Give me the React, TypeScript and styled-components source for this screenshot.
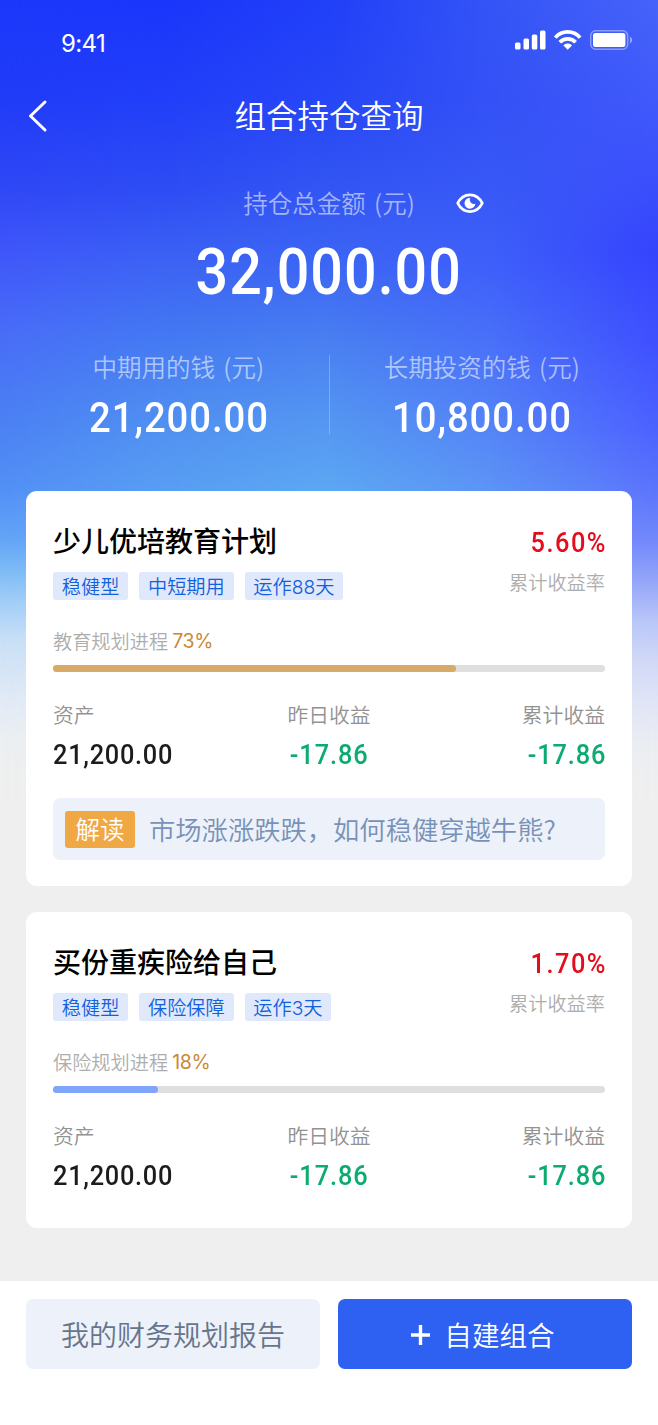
import React from "react";
import styled, { createGlobalStyle } from "styled-components";

const Global = createGlobalStyle`
  * { box-sizing: border-box; }
  body { margin: 0; background: #fff; }
`;

const Page = styled.main`
  position: relative;
  width: 658px;
  height: 1425px;
  display: flex;
  flex-direction: column;
  background: #efefef;
  overflow: hidden;
  color: #fff;
  white-space: nowrap;
  font-family: "Noto Sans CJK SC", sans-serif;
  font-weight: 350;
`;

const Backdrop = styled.div`
  position: absolute;
  inset: 0 0 auto 0;
  height: 800px;
`;

const Wash = styled.div<{ $colors: string; $mask?: string }>`
  position: absolute;
  inset: 0;
  background: linear-gradient(to bottom, ${(p) => p.$colors});
  ${(p) => p.$mask && `mask-image: linear-gradient(to right, ${p.$mask});`}
`;

const coolFade = "#64a5f6 540px, #7dbbf6 570px, #a0cdf8 600px, #c9e0f7 640px, #e2eaf5 700px, #eceff2 740px, #efefef 790px";
const violetFade = "#7288fb 540px, #93a5f8 580px, #b8c5f8 620px, #d0d8f6 660px, #dfe4f6 700px, #ebedf2 745px, #efefef 790px";

const washes = [
  { colors: `#1c38fb 0, #213cf8 100px, #3048f6 190px, #3f56fa 250px, #496cf8 330px, #4b80f4 420px, #5390f6 490px, ${coolFade}` },
  { colors: `#1a36fb 0, #223ff9 100px, #2e4df4 190px, #3c62f4 260px, #447af2 340px, #4f8df1 410px, #589ef3 490px, ${coolFade}`, mask: "transparent 0, #000 165px" },
  { colors: "#2140f9 0, #2747f6 100px, #3356f3 190px, #3d68f3 270px, #4b82f1 350px, #5496f1 420px, #5ca8f3 490px, #efefef 790px", mask: "transparent 165px, #000 329px" },
  { colors: `#3555f6 0, #3452f6 100px, #3859f6 190px, #3f60fa 270px, #4a72f8 350px, #5482f7 420px, #5c94f5 490px, ${violetFade}`, mask: "transparent 329px, #000 494px" },
  { colors: `#4663f9 0, #4059fb 100px, #3b4efc 190px, #3544fd 250px, #3f50ff 340px, #4c62ff 430px, #5c74fc 490px, ${violetFade}`, mask: "transparent 494px, #000 658px" },
];

const StatusBar = styled.header`
  position: relative;
  height: 80px;
  padding: 27px 25px 0 61px;
  display: flex;
  justify-content: space-between;
`;
const Clock = styled.span`
  font: 400 24px/34px "Inter", sans-serif;
  letter-spacing: -0.6px;
`;
const StatusIcons = styled.svg`
  display: block;
  width: 118px;
  height: 24px;
  margin-top: 2px;
`;
const NavBar = styled.nav`
  position: relative;
  height: 72px;
  display: flex;
  align-items: center;
  justify-content: center;
`;
const BackButton = styled.button`
  position: absolute;
  left: 26px;
  top: 17px;
  padding: 0;
  border: 0;
  background: none;
  line-height: 0;
`;
const Title = styled.h1`
  margin: 0 0 4px;
  font-size: 31.5px;
  line-height: 44px;
  font-weight: 350;
`;
const Total = styled.section`
  position: relative;
  height: 186px;
  padding-top: 33px;
  display: flex;
  flex-direction: column;
  align-items: center;
`;
const TotalLabel = styled.div`
  display: flex;
  align-items: center;
  gap: 41px;
  padding-left: 69px;
  line-height: 36px;
`;
const EyeIcon = styled.svg`
  display: block;
`;
const Caption = styled.span`
  font-size: 24.5px;
  line-height: 36px;
  word-spacing: 3px;
  color: rgba(255, 255, 255, 0.56);
`;
const Figure = styled.span<{ $size: number; $color?: string; $origin?: string; $spacing?: number }>`
  display: block;
  font-family: "Roboto", sans-serif;
  font-weight: 500;
  font-size: ${(p) => p.$size}px;
  line-height: 1.2;
  letter-spacing: ${(p) => p.$spacing ?? 0.024}em;
  margin-right: -${(p) => p.$spacing ?? 0.024}em;
  color: ${(p) => p.$color ?? "#fff"};
  transform: scaleX(0.89);
  transform-origin: ${(p) => p.$origin ?? "center"};
`;
const TotalFigure = styled.div`
  margin: 13px 2px 0 0;
`;
const Split = styled.section`
  position: relative;
  height: 153px;
  display: flex;
  padding-top: 11px;
`;
const SplitItem = styled.div<{ $left?: number; $right?: number }>`
  flex: none;
  width: 328.5px;
  display: flex;
  flex-direction: column;
  align-items: center;
  gap: 7px;
  padding-left: ${(p) => p.$left ?? 0}px;
  padding-right: ${(p) => p.$right ?? 0}px;
`;
const Divider = styled.i`
  flex: none;
  width: 1px;
  height: 79px;
  margin-top: 6px;
  background: rgba(255, 255, 255, 0.26);
`;
const Cards = styled.div`
  position: relative;
  display: flex;
  flex-direction: column;
  gap: 26px;
  padding: 0 26px;
`;
const Card = styled.article<{ $height: number }>`
  height: ${(p) => p.$height}px;
  padding: 32px 27px 0;
  border-radius: 11px;
  background: #fff;
`;
const CardTop = styled.div`
  display: flex;
  justify-content: space-between;
  height: 101px;
`;
const CardTitle = styled.h2`
  margin: -1px 0 0;
  font-size: 28px;
  line-height: 36px;
  font-weight: 500;
  color: #000;
`;
const Tags = styled.div`
  display: flex;
  gap: 11px;
  margin-top: 14px;
`;
const Tag = styled.span`
  height: 28px;
  padding: 0 8.8px;
  border-radius: 3px;
  background: #e0e8fb;
  color: #1260dc;
  font-family: "Inter", "Noto Sans CJK SC", sans-serif;
  font-size: 19.2px;
  line-height: 30px;
`;
const Rate = styled.div`
  display: flex;
  flex-direction: column;
  align-items: flex-end;
  padding-top: 3px;
`;
const RateLabel = styled.span`
  font-size: 19.2px;
  line-height: 28px;
  margin-top: 8px;
  color: #adadad;
`;
const Progress = styled.div`
  display: flex;
  align-items: center;
  gap: 4px;
  height: 34px;
  font-size: 19.2px;
  color: #adadad;
`;
const Percent = styled.span`
  font: 400 19.5px/34px "Inter", sans-serif;
  letter-spacing: -0.3px;
  color: #c98a35;
`;
const Track = styled.div`
  height: 7px;
  margin-top: 7px;
  border-radius: 4px;
  background: #dfdfdf;
`;
const Fill = styled.div<{ $color: string }>`
  height: 7px;
  border-radius: 4px;
  background: ${(p) => p.$color};
`;
const Stats = styled.div`
  display: grid;
  grid-template-columns: 1fr 1fr 1fr;
  margin-top: 26px;
`;
const Stat = styled.div<{ $align: string }>`
  display: flex;
  flex-direction: column;
  align-items: ${(p) => p.$align};
  gap: 8px;
`;
const StatLabel = styled.span`
  font-size: 20.8px;
  line-height: 32px;
  color: #929292;
`;
const Notice = styled.div`
  display: flex;
  align-items: center;
  gap: 14px;
  height: 62px;
  margin-top: 26px;
  padding-left: 12px;
  border-radius: 7px;
  background: #edf1f9;
  color: #7891b8;
  font-size: 26.3px;
`;
const NoticeText = styled.span`
  line-height: 36px;
`;
const Badge = styled.span`
  width: 70px;
  height: 37px;
  border-radius: 3px;
  background: #f0a844;
  color: #fff;
  font-size: 24.5px;
  line-height: 36px;
  text-align: center;
`;
const Footer = styled.footer`
  position: relative;
  height: 144px;
  margin-top: auto;
  padding: 18px 26px;
  display: flex;
  gap: 18px;
  background: #fff;
`;
const Action = styled.button<{ $primary?: boolean }>`
  flex: 1;
  height: 70px;
  padding: 0;
  border: 0;
  border-radius: 7px;
  display: flex;
  align-items: center;
  justify-content: center;
  gap: 14px;
  font-family: inherit;
  font-size: ${(p) => (p.$primary ? 27.6 : 28)}px;
  font-weight: 350;
  background: ${(p) => (p.$primary ? "#2e60f1" : "#edf1f9")};
  color: ${(p) => (p.$primary ? "#fff" : "#66758c")};
`;
const PlusIcon = styled.svg`
  margin: 1px 0 0 -4px;
`;

const plans = [
  { title: "少儿优培教育计划", tags: ["稳健型", "中短期用", "运作88天"], rate: "5.60%", label: "教育规划进程", percent: 73, bar: 73, color: "#d7ab67", height: 395, notice: "市场涨涨跌跌，如何稳健穿越牛熊?" },
  { title: "买份重疾险给自己", tags: ["稳健型", "保险保障", "运作3天"], rate: "1.70%", label: "保险规划进程", percent: 18, bar: 19, color: "#7ea4fb", height: 316 },
];

export default function App() {
  return (
    <Page>
      <Global />
      <Backdrop>
        {washes.map((w) => <Wash key={w.colors} $colors={w.colors} $mask={w.mask} />)}
      </Backdrop>
      <StatusBar>
        <Clock>9:41</Clock>
        <StatusIcons viewBox="0 0 118 24" fill="#fff">
          <rect x="0" y="13.5" width="5.5" height="7" rx="1.5" />
          <rect x="8.5" y="9.5" width="5.5" height="11" rx="1.5" />
          <rect x="16.8" y="5.5" width="5.5" height="15" rx="1.5" />
          <rect x="25" y="1.5" width="5.5" height="19" rx="1.5" />
          <g fill="none" stroke="#fff" strokeWidth="3.7">
            <path d="M40.3 8.6C47 1 58.4 1 65.1 8.6" />
            <path d="M44.8 13.3C49 8.6 56.4 8.6 60.6 13.3" />
          </g>
          <path d="M48.4 16.4C50.9 14 54.5 14 57 16.4L52.7 20.8Z" />
          <rect x="75.7" y="1.7" width="37" height="18.6" rx="5" fill="none" stroke="#fff" strokeOpacity=".4" strokeWidth="1.5" />
          <rect x="78" y="4" width="32.4" height="14" rx="2.5" />
          <path d="M115 7.5Q117.2 8.5 117.2 11T115 14.5Z" opacity=".45" />
        </StatusIcons>
      </StatusBar>
      <NavBar>
        <BackButton aria-label="返回">
          <svg width="26" height="38" fill="none" stroke="#fff" strokeWidth="3" strokeLinecap="round" strokeLinejoin="round">
            <path d="M19 5L4.5 19L19 33" />
          </svg>
        </BackButton>
        <Title>组合持仓查询</Title>
      </NavBar>
      <Total>
        <TotalLabel>
          <Caption>持仓总金额 (元)</Caption>
          <EyeIcon width="28" height="22" viewBox="0 0 28 22" fill="none">
            <path d="M1.7 11.2C4.5 5.6 8.4 2.8 14 2.8S23.5 5.6 26.3 11.2C23.5 16.8 19.6 19.6 14 19.6S4.5 16.8 1.7 11.2Z" stroke="#fff" strokeWidth="2.7" strokeLinejoin="round" />
            <path d="M14.2 5.9A5.4 5.4 0 1 0 19.3 11.4A3.9 3.9 0 0 1 14.2 5.9Z" fill="#fff" />
          </EyeIcon>
        </TotalLabel>
        <TotalFigure><Figure $size={64.5} $spacing={0.018}>32,000.00</Figure></TotalFigure>
      </Total>
      <Split>
        <SplitItem $left={28}>
          <Caption>中期用的钱 (元)</Caption>
          <Figure $size={43}>21,200.00</Figure>
        </SplitItem>
        <Divider />
        <SplitItem $right={24}>
          <Caption>长期投资的钱 (元)</Caption>
          <Figure $size={43}>10,800.00</Figure>
        </SplitItem>
      </Split>
      <Cards>
        {plans.map((p) => (
          <Card key={p.title} $height={p.height}>
            <CardTop>
              <div>
                <CardTitle>{p.title}</CardTitle>
                <Tags>{p.tags.map((t) => <Tag key={t}>{t}</Tag>)}</Tags>
              </div>
              <Rate>
                <Figure $size={28.5} $spacing={0.06} $color="#e30d1b" $origin="right">{p.rate}</Figure>
                <RateLabel>累计收益率</RateLabel>
              </Rate>
            </CardTop>
            <Progress>{p.label}<Percent>{p.percent}%</Percent></Progress>
            <Track><Fill $color={p.color} style={{ width: `${p.bar}%` }} /></Track>
            <Stats>
              <Stat $align="flex-start">
                <StatLabel>资产</StatLabel>
                <Figure $size={28.5} $spacing={0.028} $color="#1c1c1c" $origin="left">21,200.00</Figure>
              </Stat>
              <Stat $align="center">
                <StatLabel>昨日收益</StatLabel>
                <Figure $size={28.5} $spacing={0.035} $color="#0cab70">-17.86</Figure>
              </Stat>
              <Stat $align="flex-end">
                <StatLabel>累计收益</StatLabel>
                <Figure $size={28.5} $spacing={0.035} $color="#0cab70" $origin="right">-17.86</Figure>
              </Stat>
            </Stats>
            {p.notice && <Notice><Badge>解读</Badge><NoticeText>{p.notice}</NoticeText></Notice>}
          </Card>
        ))}
      </Cards>
      <Footer>
        <Action>我的财务规划报告</Action>
        <Action $primary>
          <PlusIcon width="19" height="20" stroke="#fff" strokeWidth="3.4"><path d="M0 10H19M9.5 0V20" /></PlusIcon>
          自建组合
        </Action>
      </Footer>
    </Page>
  );
}
